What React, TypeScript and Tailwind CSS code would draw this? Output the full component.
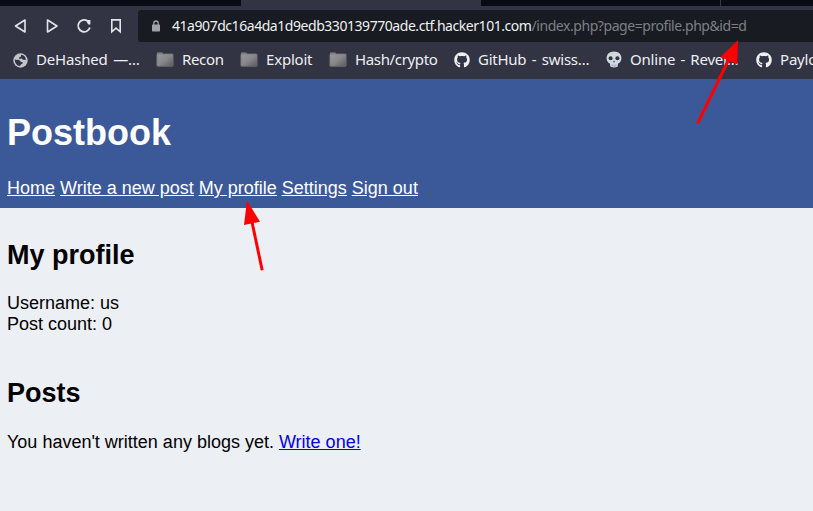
import React from "react";
import { FaGithub } from "react-icons/fa";

function Folder() {
  return (
    <svg width="18" height="16" viewBox="0 0 18 16" className="shrink-0">
      <defs>
        <linearGradient id="folder" x1="0" y1="0" x2="1" y2="1">
          <stop offset="0" stopColor="#98989a" />
          <stop offset=".5" stopColor="#88888b" />
          <stop offset="1" stopColor="#58585b" />
        </linearGradient>
      </defs>
      <path d="M1 2.5V.9Q1 .5 1.5.5H6Q6.6.5 6.8 1.5L7 2.5Z" fill="#88888a" />
      <rect x=".9" y="1.9" width="16.2" height="12.4" rx=".8" fill="url(#folder)" stroke="#77777a" strokeWidth=".7" />
    </svg>
  );
}

function Globe() {
  return (
    <svg width="15" height="16" viewBox="0 -1 15 16" className="shrink-0">
      <circle cx="7.5" cy="7.5" r="7.2" fill="#c3c5cb" />
      <path
        d="M1.9 6.3C3.5 7.6 4.6 6.4 6 7C7.8 7.8 7.2 9.2 9.2 9.3C10.8 9.5 9.3 11 8.2 11.2C7.2 11.5 7.6 13 6.8 13.1C4 12.8 1.6 10.2 1.9 6.3Z M8.3 1.8C7.5 2.6 8.6 3.4 7.3 3.9C6.1 4.3 5.3 4.7 6.1 5.6C7.2 6.3 8.3 5 9.2 5.9C10 7 11.7 7.2 13 6.6C12.5 3.8 11 2.1 8.3 1.8Z"
        fill="#323443"
      />
    </svg>
  );
}

function Skull() {
  return (
    <svg width="16" height="17" viewBox="0 0 16 17" className="shrink-0">
      <path
        d="M8 .5C3.6.5.6 3.3.6 7c0 2 .5 3 1.2 3.8.5.7.8 1.2 1.4 1.4l.8.3.2 2.6c.4 1 1.5 1.4 3.8 1.4s3.4-.4 3.8-1.4l.2-2.6.8-.3c.6-.2.9-.7 1.4-1.4.7-.8 1.2-1.8 1.2-3.8C15.4 3.3 12.4.5 8 .5Z"
        fill="#cfd9df"
      />
      <ellipse cx="4.6" cy="7.2" rx="2" ry="2" fill="#32343c" />
      <ellipse cx="11.4" cy="7.2" rx="2" ry="2" fill="#32343c" />
      <path d="M8 9.4L6.9 11.3H9.1Z" fill="#414750" />
      <path d="M6.3 13.5v2M8 13.7v2M9.7 13.5v2" stroke="#89949c" strokeWidth=".7" />
    </svg>
  );
}

function Bookmark({ icon, label, className }: { icon: React.ReactNode; label: string; className: string }) {
  return (
    <div className={`flex shrink-0 items-center gap-2 whitespace-nowrap ${className}`}>
      {icon}
      <span className="pb-0.5">{label}</span>
    </div>
  );
}

function Toolbar() {
  return (
    <div className="flex h-9 items-start pl-3">
      <div className="flex h-9 w-[126px] items-center gap-3 pb-px pt-1 text-[#e3e4e8]">
        <svg width="20" height="20" viewBox="0 0 20 20" fill="none" stroke="currentColor" strokeWidth="1.6" strokeLinejoin="round">
          <path d="M13 4V16L3.5 10Z" />
        </svg>
        <svg width="20" height="20" viewBox="0 0 20 20" fill="none" stroke="currentColor" strokeWidth="1.6" strokeLinejoin="round">
          <path d="M3.5 4V16L13 10Z" />
        </svg>
        <svg width="20" height="20" viewBox="0 0 20 20" fill="none" stroke="currentColor" strokeWidth="1.8">
          <path d="M11.3 4.7A6 6 0 1 0 13.9 11.6" />
          <path d="M9.8 4H14.4V8.5H12.2Z" fill="currentColor" stroke="none" />
        </svg>
        <svg width="20" height="20" viewBox="0 0 20 20" fill="none" stroke="currentColor" strokeWidth="1.6" strokeLinejoin="miter">
          <path d="M3.8 3.9H12.2V15.8L8 12.1L3.8 15.8Z" />
        </svg>
      </div>
      <div className="mt-1 flex h-8 flex-1 items-center rounded-l-[3px] bg-[#181b21] pl-[14px] text-[14px] leading-5 text-[#7e8085]">
        <svg width="8" height="12" viewBox="0 0 8 12" className="mr-3 shrink-0">
          <path d="M1.8 6V3.2a2.2 2.2 0 0 1 4.4 0V6" fill="none" stroke="#a0a2a8" strokeWidth="1.3" />
          <rect y="4.5" width="8" height="7" rx=".7" fill="#a0a2a8" />
        </svg>
        <span className="whitespace-nowrap tracking-[-0.44px]">
          <span className="tracking-[-0.45px] text-[#eff0f2]">41a907dc16a4da1d9edb330139770ade.ctf.hacker101.com</span>
          /index.php?page=profile.php&amp;id=d
        </span>
      </div>
    </div>
  );
}

function Arrows() {
  return (
    <svg width="813" height="511" className="pointer-events-none absolute left-0 top-0" fill="#ff0000" stroke="#ff0000">
      <path d="M697.5 123.5L729 59" strokeWidth="3" />
      <path d="M738 40L737.3 64.5L720.5 57Z" stroke="none" />
      <path d="M262.2 270.3L252 222" strokeWidth="3" />
      <path d="M247 200.5L260 221.7L244 225Z" stroke="none" />
    </svg>
  );
}

export default function App() {
  return (
    <div className="relative flex h-[511px] w-[813px] flex-col overflow-hidden bg-[#eceff4] font-['Liberation_Sans',sans-serif] text-[18px] leading-[21px] text-black">
      <div className="h-[79px] shrink-0 bg-[#323443] font-['Noto_Sans',sans-serif]">
        <div className="flex h-1.5">
          <div className="w-[241px] bg-[#090a13]" />
          <div className="w-[240px]" />
          <div className="w-[239px] bg-[#090a13]" />
          <div className="w-px bg-[#373944]" />
          <div className="flex-1 bg-[#090a13]" />
        </div>
        <Toolbar />
        <div className="flex h-[35px] items-center pl-[13px] text-[15px] leading-5 text-[#eeeff2]">
          <Bookmark icon={<Globe />} label="DeHashed —…" className="w-[143px] tracking-[-0.2px] [word-spacing:2px]" />
          <Bookmark icon={<Folder />} label="Recon" className="w-[84px] tracking-[-0.35px]" />
          <Bookmark icon={<Folder />} label="Exploit" className="w-[89px] tracking-[-0.2px]" />
          <Bookmark icon={<Folder />} label="Hash/crypto" className="w-[125px] tracking-[-0.35px]" />
          <Bookmark icon={<FaGithub size={16} />} label="GitHub - swiss…" className="w-[152px] tracking-[-0.25px] [word-spacing:1.8px]" />
          <Bookmark icon={<Skull />} label="Online - Rever…" className="w-[150px] tracking-[-0.2px] [word-spacing:1.5px]" />
          <Bookmark icon={<FaGithub size={16} />} label="PayloadsAll" className="tracking-[-0.2px]" />
        </div>
      </div>
      <header className="h-[129px] shrink-0 bg-[#3b5998] pl-[7px] pt-[33px] text-white">
        <h1 className="text-[36px] font-bold leading-[42px]">Postbook</h1>
        <nav className="mt-6 flex gap-[5px] underline">
          <a>Home</a>
          <a>Write a new post</a>
          <a>My profile</a>
          <a>Settings</a>
          <a>Sign out</a>
        </nav>
      </header>
      <main className="pl-[7px] pt-8">
        <h2 className="text-[27px] font-bold leading-[31px]">My profile</h2>
        <p className="mt-[22px]">Username: us</p>
        <p>Post count: 0</p>
        <h2 className="mt-[43px] text-[27px] font-bold leading-[31px]">Posts</h2>
        <p className="mt-[23px]">
          You haven't written any blogs yet. <a className="text-[#0000ee] underline">Write one!</a>
        </p>
      </main>
      <Arrows />
    </div>
  );
}
